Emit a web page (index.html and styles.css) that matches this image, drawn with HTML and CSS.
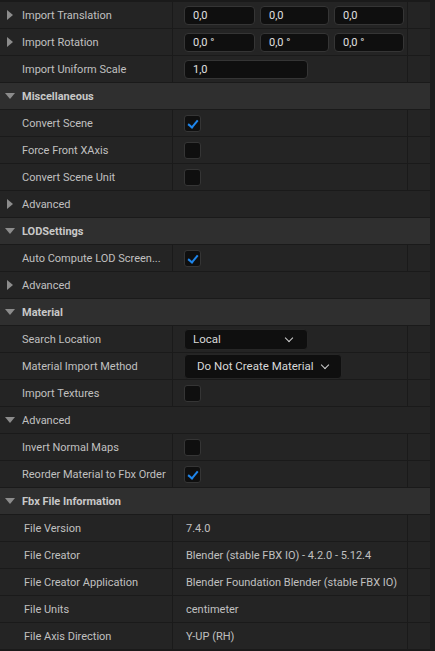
FILE: index.html
```html
<!DOCTYPE html>
<html lang="en">
<head>
    <meta charset="UTF-8">
    <meta name="viewport" content="width=device-width, initial-scale=1.0">
    <title>FBX Import Options</title>
    <link rel="stylesheet" href="styles.css">
</head>
<body>

    <div class="panel">
        <div class="details">

            <div class="row">
                <div class="name"><span class="arrow right"></span>Import Translation</div>
                <div class="value vec">
                    <div class="field">0,0</div>
                    <div class="field">0,0</div>
                    <div class="field">0,0</div>
                </div>
                <div class="extra"></div>
            </div>
            <div class="row">
                <div class="name"><span class="arrow right"></span>Import Rotation</div>
                <div class="value vec">
                    <div class="field">0,0 °</div>
                    <div class="field">0,0 °</div>
                    <div class="field">0,0 °</div>
                </div>
                <div class="extra"></div>
            </div>
            <div class="row">
                <div class="name"><span class="arrow"></span>Import Uniform Scale</div>
                <div class="value"><div class="field wide">1,0</div></div>
                <div class="extra"></div>
            </div>

            <div class="row category"><span class="arrow down"></span>Miscellaneous</div>
            <div class="row">
                <div class="name"><span class="arrow"></span>Convert Scene</div>
                <div class="value"><span class="check on"></span></div>
                <div class="extra"></div>
            </div>
            <div class="row">
                <div class="name"><span class="arrow"></span>Force Front XAxis</div>
                <div class="value"><span class="check"></span></div>
                <div class="extra"></div>
            </div>
            <div class="row">
                <div class="name"><span class="arrow"></span>Convert Scene Unit</div>
                <div class="value"><span class="check"></span></div>
                <div class="extra"></div>
            </div>
            <div class="row group"><span class="arrow right"></span>Advanced</div>

            <div class="row category"><span class="arrow down"></span>LODSettings</div>
            <div class="row">
                <div class="name"><span class="arrow"></span>Auto Compute LOD Screen...</div>
                <div class="value"><span class="check on"></span></div>
                <div class="extra"></div>
            </div>
            <div class="row group"><span class="arrow right"></span>Advanced</div>

            <div class="row category"><span class="arrow down"></span>Material</div>
            <div class="row">
                <div class="name"><span class="arrow"></span>Search Location</div>
                <div class="value"><div class="combo local">Local<span class="chevron"></span></div></div>
                <div class="extra"></div>
            </div>
            <div class="row">
                <div class="name"><span class="arrow"></span>Material Import Method</div>
                <div class="value"><div class="combo tall">Do Not Create Material<span class="chevron"></span></div></div>
                <div class="extra"></div>
            </div>
            <div class="row">
                <div class="name"><span class="arrow"></span>Import Textures</div>
                <div class="value"><span class="check"></span></div>
                <div class="extra"></div>
            </div>
            <div class="row group"><span class="arrow down"></span>Advanced</div>
            <div class="row">
                <div class="name"><span class="arrow"></span>Invert Normal Maps</div>
                <div class="value"><span class="check"></span></div>
                <div class="extra"></div>
            </div>
            <div class="row">
                <div class="name"><span class="arrow"></span>Reorder Material to Fbx Order</div>
                <div class="value"><span class="check on"></span></div>
                <div class="extra"></div>
            </div>

            <div class="row category"><span class="arrow down"></span>Fbx File Information</div>
            <div class="row info">
                <div class="name">File Version</div>
                <div class="value text">7.4.0</div>
                <div class="extra"></div>
            </div>
            <div class="row info">
                <div class="name">File Creator</div>
                <div class="value text">Blender (stable FBX IO) - 4.2.0 - 5.12.4</div>
                <div class="extra"></div>
            </div>
            <div class="row info">
                <div class="name">File Creator Application</div>
                <div class="value text">Blender Foundation Blender (stable FBX IO)</div>
                <div class="extra"></div>
            </div>
            <div class="row info">
                <div class="name">File Units</div>
                <div class="value text">centimeter</div>
                <div class="extra"></div>
            </div>
            <div class="row info">
                <div class="name">File Axis Direction</div>
                <div class="value text">Y-UP (RH)</div>
                <div class="extra"></div>
            </div>

        </div>
        <div class="scrollbar"></div>
    </div>

</body>
</html>
```

FILE: styles.css
```css
body {
    margin: 0;
    background-color: #1a1a1a;
    font-family: Roboto, "Liberation Sans", sans-serif;
    font-size: 11px;
    color: #c0c0c0;
}
.panel {
    display: flex;
    width: 435px;
    height: 651px;
    overflow: hidden;
}
.details {
    width: 430px;
    border-top: 2px solid #1a1a1a;
}
.scrollbar {
    flex: 1;
    background-color: #1c1c1c;
}

/* one property line */
.row {
    display: grid;
    grid-template-columns: 172px 235px 1fr;
    height: 26px;
    border-bottom: 1px solid #1a1a1a;
    background-color: #242424;
}
.row > div {
    display: flex;
    align-items: center;
    min-width: 0;
}
.value, .extra {
    border-left: 1px solid #1a1a1a;
}
.value {
    padding-left: 11px;
}
.name {
    white-space: nowrap;
    overflow: hidden;
}

/* category headers and sub-groups span the whole width */
.row.category,
.row.group {
    display: flex;
    align-items: center;
}
.row.category {
    background-color: #2f2f2f;
    font-weight: bold;
    color: #c8c8c8;
}

.arrow {
    flex: none;
    width: 22px;
    height: 26px;
    position: relative;
}
.arrow.right::before {
    content: "";
    position: absolute;
    left: 7px;
    top: 8px;
    border-top: 5px solid transparent;
    border-bottom: 5px solid transparent;
    border-left: 6px solid #8c8c8c;
}
.arrow.down::before {
    content: "";
    position: absolute;
    left: 5px;
    top: 10px;
    border-left: 5px solid transparent;
    border-right: 5px solid transparent;
    border-top: 6px solid #8c8c8c;
}

/* vector and number inputs */
.vec {
    gap: 5px;
}
.field {
    box-sizing: border-box;
    height: 19px;
    width: 71px;
    padding-left: 8px;
    display: flex;
    align-items: center;
    background-color: #0f0f0f;
    border: 1px solid #353535;
    border-radius: 4px;
    color: #e0e0e0;
}
.vec .field:nth-child(2) {
    width: 69px;
}
.vec .field:nth-child(3) {
    width: 70px;
}
.field.wide {
    width: 124px;
}

.check {
    box-sizing: border-box;
    width: 17px;
    height: 17px;
    background-color: #0f0f0f;
    border: 1px solid #353535;
    border-radius: 3px;
    position: relative;
}
.check.on::after {
    content: "";
    position: absolute;
    left: 5px;
    top: 2px;
    width: 4px;
    height: 8px;
    border-right: 2px solid #1f86ec;
    border-bottom: 2px solid #1f86ec;
    transform: rotate(40deg);
}

/* dropdowns */
.combo {
    box-sizing: border-box;
    display: flex;
    align-items: center;
    background-color: #0f0f0f;
    border: 1px solid #262626;
    border-radius: 4px;
    color: #d8d8d8;
    font-size: 11.5px;
}
.combo.local {
    width: 124px;
    height: 21px;
    padding-left: 8px;
}
.combo.tall {
    width: 158px;
    height: 25px;
    padding-left: 12px;
}
.chevron {
    width: 5px;
    height: 5px;
    border-right: 1.5px solid #d0d0d0;
    border-bottom: 1.5px solid #d0d0d0;
    transform: rotate(45deg);
    margin-bottom: 3px;
}
.combo.local .chevron {
    margin-left: auto;
    margin-right: 15px;
}
.combo.tall .chevron {
    margin-left: 8px;
}

/* read-only file information */
.row.info .name {
    padding-left: 24px;
}
.value.text {
    padding-left: 13px;
    white-space: nowrap;
}
```
